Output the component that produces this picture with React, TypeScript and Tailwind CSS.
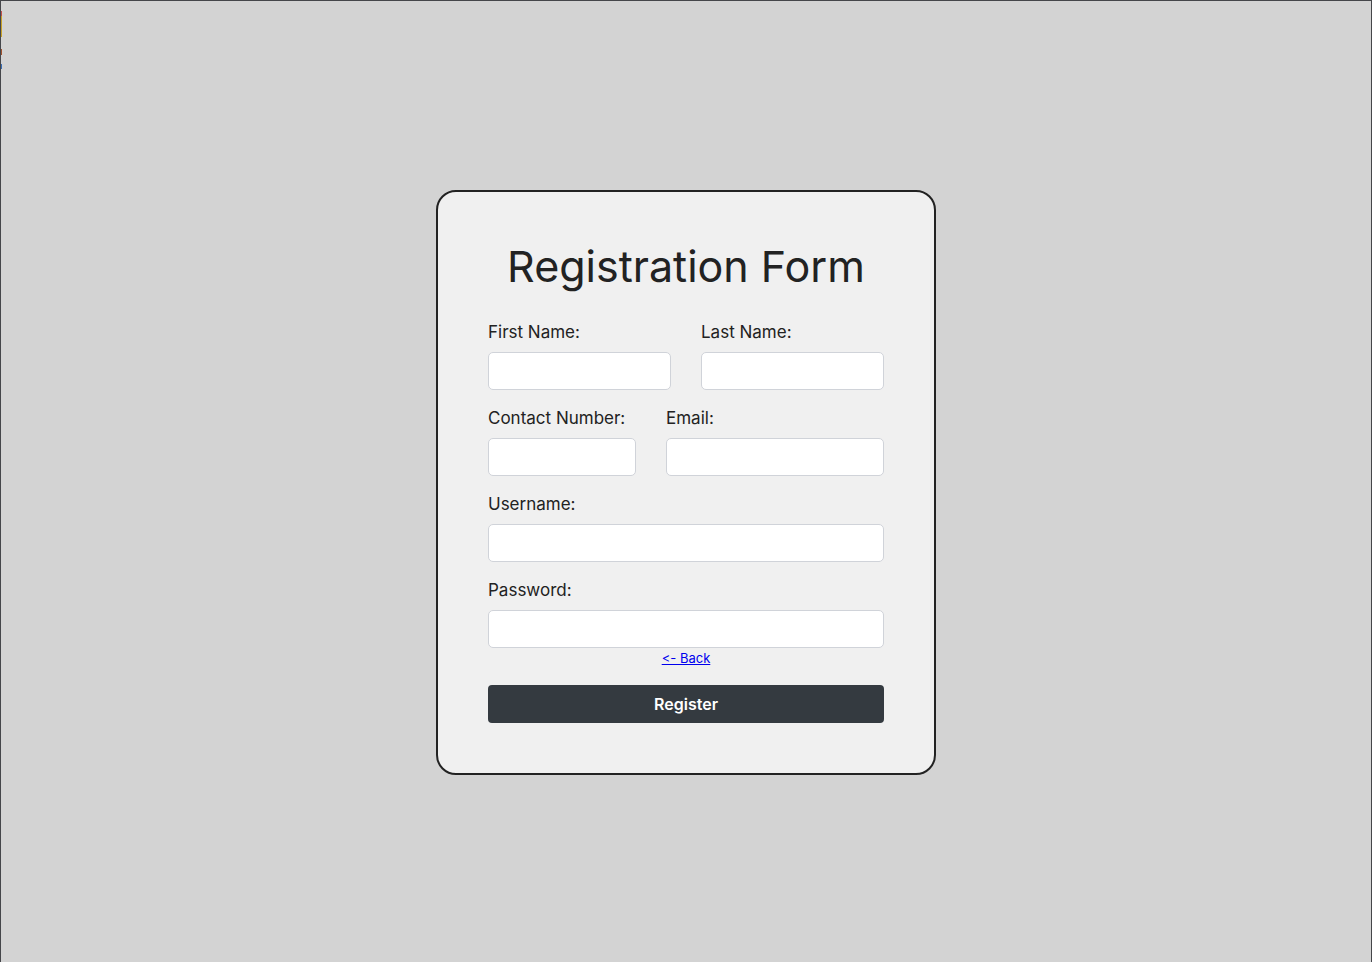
export default function App() {
  const label = "block text-[17px] leading-[24px] text-[#222]";
  const input = "block h-[38px] rounded-[5px] border border-[#d0d3d9] bg-white px-2 outline-none";
  return (
    <div className="relative min-h-[962px] border-l border-r border-t border-[#45464a] bg-[#d3d3d3] font-['Inter',sans-serif]">
      {/* thin coloured artefacts on the left edge */}
      <span className="absolute left-0 top-[10px] h-[5px] w-px bg-[#c0504d]" />
      <span className="absolute left-0 top-[15px] h-[21px] w-px bg-[#c9a227]" />
      <span className="absolute left-0 top-[48px] h-[6px] w-px bg-[#a0522d]" />
      <span className="absolute left-0 top-[63px] h-[5px] w-px bg-[#3b6fb6]" />

      <div className="flex justify-center pt-[189px]">
        <form className="w-[500px] rounded-[20px] border-2 border-[#222] bg-[#f0f0f0] px-[50px] pb-[50px] pt-[44px]">
          <h1 className="mb-[24px] text-center text-[43px] leading-[60px] text-[#222]">Registration Form</h1>

          <div className="flex gap-[30px]">
            <div className="w-[183px]">
              <label className={label}>First Name:</label>
              <input className={`${input} mt-[8px] w-full`} />
            </div>
            <div className="w-[183px]">
              <label className={label}>Last Name:</label>
              <input className={`${input} mt-[8px] w-full`} />
            </div>
          </div>

          <div className="mt-[16px] flex gap-[30px]">
            <div className="w-[148px]">
              <label className={`${label} whitespace-nowrap`}>Contact Number:</label>
              <input className={`${input} mt-[8px] w-full`} />
            </div>
            <div className="w-[218px]">
              <label className={label}>Email:</label>
              <input className={`${input} mt-[8px] w-full`} />
            </div>
          </div>

          <div className="mt-[16px]">
            <label className={label}>Username:</label>
            <input className={`${input} mt-[8px] w-full`} />
          </div>

          <div className="mt-[16px]">
            <label className={label}>Password:</label>
            <input type="password" className={`${input} mt-[8px] w-full`} />
          </div>

          <div className="text-center text-[13px] leading-[20px] [font-feature-settings:'calt'_0,'liga'_0]">
            <a href="#" className="text-[#0000ee] underline">&lt;- Back</a>
          </div>

          <button
            type="button"
            className="mt-[17px] block h-[38px] w-full rounded-[4px] bg-[#343a40] text-[16px] font-semibold text-white"
          >
            Register
          </button>
        </form>
      </div>
    </div>
  );
}
